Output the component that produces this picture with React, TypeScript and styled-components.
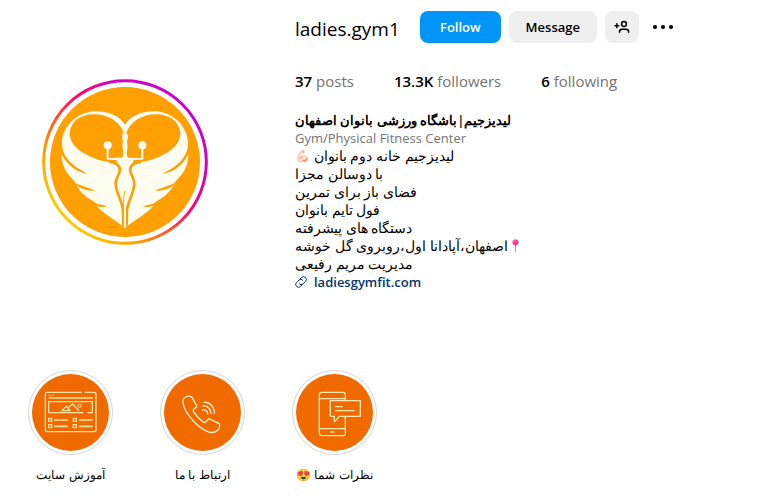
import React from 'react';
import styled, { createGlobalStyle } from 'styled-components';

const GlobalStyle = createGlobalStyle`
  *, *::before, *::after { box-sizing: border-box; }
  body {
    margin: 0;
    background: #fff;
    color: #000;
    font-family: "Open Sans", sans-serif;
  }
  button { font-family: inherit; }
`;

const Page = styled.main`
  padding: 11px 24px 16px 0;
`;

const Profile = styled.header`
  display: grid;
  grid-template-columns: 250px minmax(0, 1fr);
  column-gap: 45px;
`;

const AvatarButton = styled.button`
  justify-self: center;
  align-self: start;
  margin-top: 68px;
  padding: 0;
  border: 0;
  background: none;
  cursor: pointer;
  svg { display: block; width: 166px; height: 166px; }
`;

const TopRow = styled.div`
  display: flex;
  align-items: center;
  gap: 8px;
`;

const Username = styled.h1`
  margin: 0 12px 0 0;
  font-size: 19px;
  line-height: 32px;
  font-weight: 400;
  padding-top: 2px;
  height: 32px;
`;

const Action = styled.button<{ $primary?: boolean }>`
  height: 32px;
  padding: 0 16px;
  min-width: ${p => (p.$primary ? 81 : 88)}px;
  border: 0;
  border-radius: 8px;
  background: ${p => (p.$primary ? '#0095f6' : '#efefef')};
  color: ${p => (p.$primary ? '#fff' : '#000')};
  font-size: 13px;
  font-weight: 600;
  cursor: pointer;
`;

const IconButton = styled.button<{ $plain?: boolean }>`
  display: grid;
  place-items: center;
  width: ${p => (p.$plain ? 32 : 34)}px;
  height: 32px;
  padding: 0;
  border: 0;
  border-radius: 8px;
  background: ${p => (p.$plain ? 'transparent' : '#efefef')};
  cursor: pointer;
`;

const Stats = styled.ul`
  display: flex;
  gap: 40px;
  margin: 26px 0 0;
  padding: 0;
  list-style: none;
  font-size: 15px;
  line-height: 24px;
  color: #737373;
  strong { color: #000; font-weight: 600; }
`;

const Bio = styled.section`
  margin-top: 18px;
  font-size: 13px;
  line-height: 18px;
`;

const BioName = styled.h2`
  margin: 0;
  font-size: 13px;
  line-height: 18px;
  font-weight: 600;
`;

const Category = styled.div`
  color: #737373;
`;

const BioLine = styled.div`
  height: 18px;
  font-size: 14px;
`;

const Emoji = styled.span<{ $hue?: number }>`
  display: inline-block;
  height: 18px;
  font-size: 12px;
  vertical-align: top;
  filter: hue-rotate(${p => p.$hue ?? 0}deg);
`;

const SiteLink = styled.a`
  display: flex;
  width: fit-content;
  align-items: center;
  gap: 7px;
  color: #00376b;
  font-weight: 600;
  text-decoration: none;
`;

const Highlights = styled.ul`
  display: flex;
  gap: 47px;
  margin: 79px 0 0 28px;
  padding: 0;
  list-style: none;
`;

const Highlight = styled.button`
  display: flex;
  flex-direction: column;
  align-items: center;
  width: 85px;
  padding: 0;
  border: 0;
  background: none;
  color: #000;
  cursor: pointer;
`;

const Cover = styled.span`
  display: block;
  width: 85px;
  height: 85px;
  padding: 3px;
  border: 1px solid #d4d4d4;
  border-radius: 50%;
  svg { display: block; width: 77px; height: 77px; border-radius: 50%; background: #f06a00; }
`;

const Label = styled.span`
  margin-top: 11px;
  font-size: 12px;
  line-height: 18px;
  white-space: nowrap;
`;

function WingHalf() {
  return (
    <g fill="#fffdf0">
      <path d="M270 163 C255 138 220 122 180 123 C122 126 84 170 81 215 C81 232 84 246 92 258 C108 284 132 296 158 311 C125 306 100 288 79 252 C82 288 92 305 110 324 L124 340 C142 346 162 352 181 361 C160 362 140 358 124 344 C136 366 152 380 168 388 L186 400 C197 403 207 405 217 408 C205 412 195 410 184 406 C204 428 232 444 262 466 L271 474 V290 L244 277 C205 274 180 266 161 256 C135 243 106 225 104 190 C106 155 135 132 178 132 C220 132 254 155 265 185 L271 180 Z" />
      <path d="M271 176 C266 188 259 192 262 206 C266 214 261 224 263 237 C266 248 266 258 260 262 H240 L258 300 H271 Z" />
      <path d="M222 274 C245 276 257 287 254 303 C251 318 241 325 242 342 C245 372 262 395 264 420 C265 440 264 452 266 468" fill="none" stroke="#ffa002" strokeWidth="8" />
      <path d="M218 230 V265 L258 267" fill="none" stroke="#fffdf0" strokeWidth="6" />
      <circle cx="218" cy="225" r="12" />
    </g>
  );
}

function Avatar() {
  return (
    <svg viewBox="21 26 498 498" aria-hidden="true">
      <defs>
        <linearGradient id="ring" x1="0.15" y1="0.85" x2="0.85" y2="0.15">
          <stop offset="0" stopColor="#ffc800" />
          <stop offset="0.2" stopColor="#ff9c00" />
          <stop offset="0.38" stopColor="#ff5a20" />
          <stop offset="0.58" stopColor="#ff0070" />
          <stop offset="0.82" stopColor="#d800b8" />
          <stop offset="1" stopColor="#c800d0" />
        </linearGradient>
      </defs>
      <circle cx="270" cy="275" r="244" fill="#fff" stroke="url(#ring)" strokeWidth="9" />
      <circle cx="270" cy="275" r="225" fill="#ffa002" />
      <WingHalf />
      <g transform="translate(540 0) scale(-1 1)"><WingHalf /></g>
      <path d="M270 362 C264 380 267 395 265 412" fill="none" stroke="#ffa002" strokeWidth="3" />
      <path d="M270 400 V472" stroke="#fffdf0" strokeWidth="6" />
    </svg>
  );
}

function AddPerson() {
  return (
    <svg width="16" height="16" viewBox="0 0 16 16" fill="none" stroke="#000" strokeWidth="1.5" strokeLinecap="round" aria-hidden="true">
      <circle cx="10" cy="5" r="2.4" />
      <path d="M5.5 13.2 V12.7 C5.5 11 6.5 10.3 8 10.3 H12 C13.6 10.3 14.6 11.3 14.6 12.7 V13.2 M1 6.7 H4.8 M2.9 4.8 V8.6" />
    </svg>
  );
}

function Dots() {
  return (
    <svg width="22" height="6" viewBox="0 0 22 6" aria-hidden="true">
      <circle cx="3" cy="3" r="2.1" /><circle cx="11" cy="3" r="2.1" /><circle cx="19" cy="3" r="2.1" />
    </svg>
  );
}

function LinkIcon() {
  return (
    <svg width="12" height="12" viewBox="0 0 24 24" fill="none" stroke="#00376b" strokeWidth="2" strokeLinecap="round" aria-hidden="true">
      <path d="m9.7 6.5 3.6-3.6a5.2 5.2 0 0 1 7.4 0l.4.4a5.2 5.2 0 0 1 0 7.4l-5.4 5.2a5 5 0 0 1-7 0M14.3 17.5l-3.6 3.6a5.2 5.2 0 0 1-7.4 0l-.4-.4a5.2 5.2 0 0 1 0-7.4l5.4-5.2a5 5 0 0 1 7 0" />
    </svg>
  );
}

const line = { fill: 'none', stroke: '#fbe3a6', strokeWidth: 4 };

function SiteCover() {
  return (
    <svg viewBox="36 42 231 231" aria-hidden="true">
      <g {...line}>
        <path d="M186 97 H82 Q76 97 76 103 V209 Q76 215 82 215 H222 Q228 215 228 209 V103 Q228 97 222 97 H194" />
        <path d="M84 106 H102" strokeWidth="2" />
        <path d="M86 114 H218 M190 158 H86 V125 H217 V158 H203" />
        <path d="M126 152 L139 139 L150 152 Z M146 142 L158 132 L177 152" strokeWidth="4" />
        <circle cx="179" cy="137" r="5" strokeWidth="3" />
        <path d="M86 175 h9 v9 h-9 Z M86 194 h9 v9 h-9 Z M160 175 h9 v9 h-9 Z M160 194 h9 v9 h-9 Z" />
        <path d="M102 180 H144 M102 199 H144 M177 180 H218 M177 199 H218" strokeWidth="5" />
      </g>
    </svg>
  );
}

function PhoneCover() {
  return (
    <svg viewBox="42 42 231 231" aria-hidden="true">
      <g {...line} stroke="#fff1c9" strokeLinejoin="round">
        <path d="M102 114 Q111 107 121 109 L126 112 L140 137 Q141 141 136 144 Q127 149 131 156 Q144 174 159 186 Q165 190 170 183 Q175 175 181 178 L206 190 Q210 193 209 198 Q208 207 202 212 Q192 219 179 217 C147 208 104 161 99 129 Q98 119 102 114 Z" />
        <g strokeLinecap="round">
          <path d="M162 127 C179 125 194 141 193 160 M159 138 C172 136 184 148 183 161 M158 150 C166 148 174 155 173 162" />
        </g>
      </g>
    </svg>
  );
}

function MessageCover() {
  return (
    <svg viewBox="48 42 231 231" aria-hidden="true">
      <g {...line} stroke="#ffe9b0" strokeLinejoin="round">
        <path d="M196 122 V104 Q196 97 189 97 H126 Q118 97 118 104 V219 Q118 227 126 227 H188 Q196 227 196 219 V170" />
        <path d="M118 116 H196 M118 206 H196 M151 216 H163" />
        <path d="M151 122 H241 V169 H179 L163 185 V169 H151 Z" />
        <path d="M165 140 H188 M165 152 H224" />
      </g>
    </svg>
  );
}

const stats = [
  { value: '37', label: 'posts' },
  { value: '13.3K', label: 'followers' },
  { value: '6', label: 'following' },
];

const highlights = [
  { label: 'آموزش سایت', Icon: SiteCover },
  { label: 'ارتباط با ما', Icon: PhoneCover },
  { label: 'نظرات شما 😍', Icon: MessageCover },
];

export default function App() {
  return (
    <Page>
      <GlobalStyle />
      <Profile>
        <AvatarButton aria-label="ladies.gym1"><Avatar /></AvatarButton>
        <div>
          <TopRow>
            <Username>ladies.gym1</Username>
            <Action $primary>Follow</Action>
            <Action>Message</Action>
            <IconButton aria-label="Similar accounts"><AddPerson /></IconButton>
            <IconButton $plain aria-label="Options"><Dots /></IconButton>
          </TopRow>
          <Stats>
            {stats.map(s => <li key={s.label}><strong>{s.value}</strong> {s.label}</li>)}
          </Stats>
          <Bio>
            <BioName>لیدیزجیم|باشگاه ورزشی بانوان اصفهان</BioName>
            <Category>Gym/Physical Fitness Center</Category>
            <BioLine><Emoji $hue={-15}>💪🏻</Emoji> لیدیزجیم خانه دوم بانوان</BioLine>
            <BioLine>با دوسالن مجزا</BioLine>
            <BioLine>فضای باز برای تمرین</BioLine>
            <BioLine>فول تایم بانوان</BioLine>
            <BioLine>دستگاه های پیشرفته</BioLine>
            <BioLine>اصفهان،آپادانا اول،روبروی گل خوشه<Emoji $hue={-35}>📍</Emoji></BioLine>
            <BioLine>مدیریت مریم رفیعی</BioLine>
            <SiteLink href="https://ladiesgymfit.com"><LinkIcon />ladiesgymfit.com</SiteLink>
          </Bio>
        </div>
      </Profile>
      <Highlights>
        {highlights.map(({ label, Icon }) => (
          <li key={label}>
            <Highlight>
              <Cover><Icon /></Cover>
              <Label dir="rtl">{label}</Label>
            </Highlight>
          </li>
        ))}
      </Highlights>
    </Page>
  );
}
